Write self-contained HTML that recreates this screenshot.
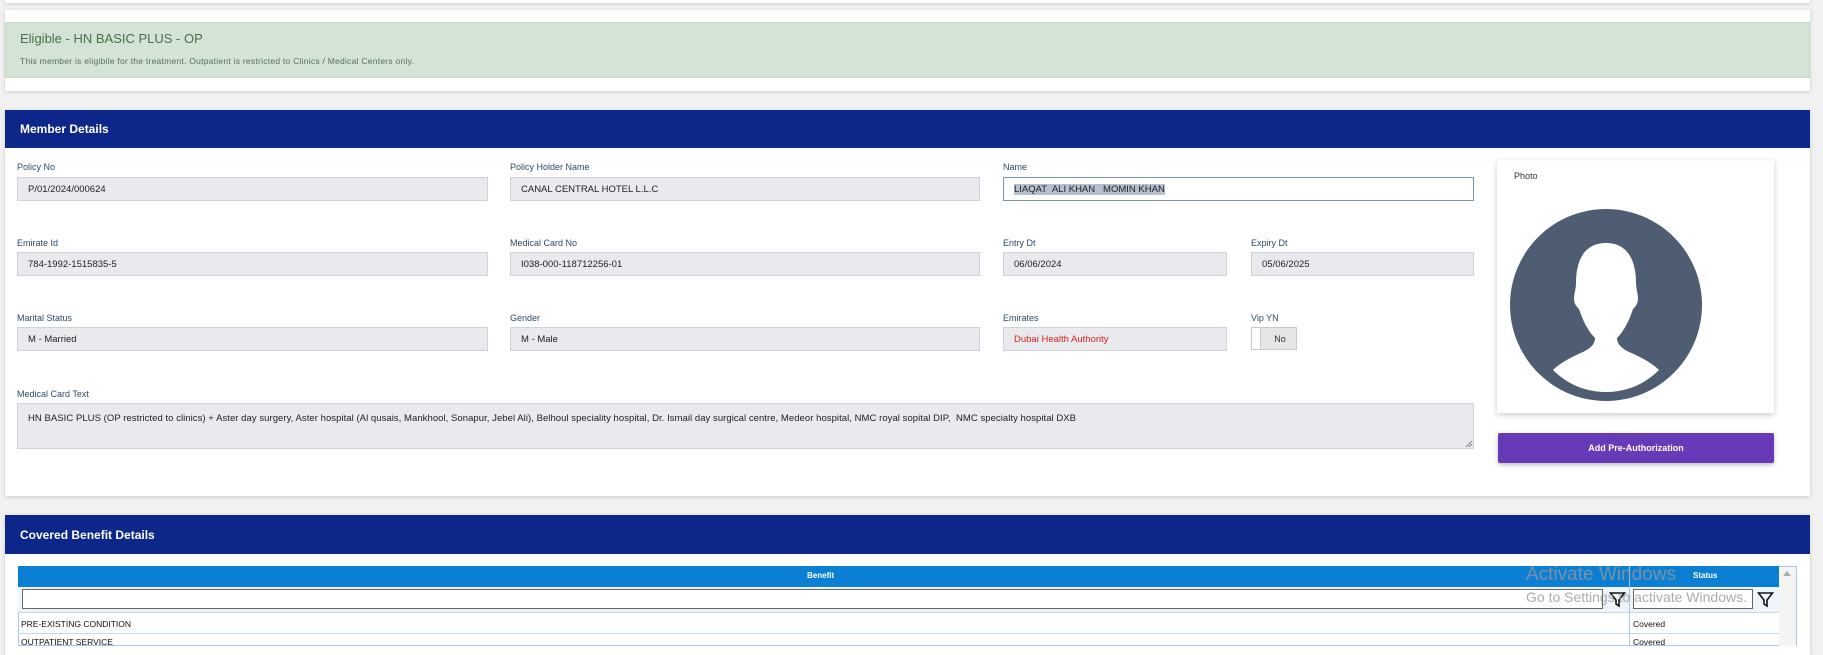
<!DOCTYPE html>
<html><head><meta charset="utf-8"><style>
*{box-sizing:border-box;margin:0;padding:0}
body{width:1823px;height:641px;overflow:hidden;background:#f1f1f1;font-family:"Liberation Sans",Arial,sans-serif;position:relative}
.abs{position:absolute}
.card{position:absolute;background:#fff;box-shadow:0 1px 4px rgba(0,0,0,.15)}
.hdr{position:absolute;background:#0d2689;color:#fff;font-size:12px;font-weight:bold;padding-left:15px;display:flex;align-items:center}
.lbl{position:absolute;font-size:9px;color:#2e4a66}
.inp{position:absolute;height:24px;background:#e8eaed;border:1px solid #cfd3d8;font-size:9.5px;color:#222;padding-left:10px;display:flex;align-items:center}
</style></head><body>
<div class="card" style="left:5px;top:-10px;width:1805px;height:13px"></div>
<div class="card" style="left:5px;top:10px;width:1805px;height:81px"></div>
<div class="abs" style="left:5px;top:22px;width:1805px;height:56px;background:#d3e3d6;border:1px solid #c5d8c8"></div>
<div class="abs" style="left:20px;top:31px;font-size:13px;color:#4b6e4b">Eligible - HN BASIC PLUS - OP</div>
<div class="abs" style="left:20px;top:56px;font-size:8.5px;color:#55705a;letter-spacing:0.25px">This member is eligibile for the treatment. Outpatient is restricted to Clinics / Medical Centers only.</div>

<div class="card" style="left:5px;top:110px;width:1805px;height:386px"></div>
<div class="hdr" style="left:5px;top:110px;width:1805px;height:38px">Member Details</div>

<div class="lbl" style="left:17px;top:162px">Policy No</div>
<div class="inp" style="left:17px;top:177px;width:471px">P/01/2024/000624</div>
<div class="lbl" style="left:510px;top:162px">Policy Holder Name</div>
<div class="inp" style="left:510px;top:177px;width:470px">CANAL CENTRAL HOTEL L.L.C</div>
<div class="lbl" style="left:1003px;top:162px">Name</div>
<div class="inp" style="left:1003px;top:177px;width:471px;background:#fff;border-color:#7d93aa"><span style="background:#b5c1cf">LIAQAT&nbsp; ALI KHAN &nbsp; MOMIN KHAN</span></div>

<div class="lbl" style="left:17px;top:238px">Emirate Id</div>
<div class="inp" style="left:17px;top:252px;width:471px">784-1992-1515835-5</div>
<div class="lbl" style="left:510px;top:238px">Medical Card No</div>
<div class="inp" style="left:510px;top:252px;width:470px">I038-000-118712256-01</div>
<div class="lbl" style="left:1003px;top:238px">Entry Dt</div>
<div class="inp" style="left:1003px;top:252px;width:224px">06/06/2024</div>
<div class="lbl" style="left:1251px;top:238px">Expiry Dt</div>
<div class="inp" style="left:1251px;top:252px;width:223px">05/06/2025</div>

<div class="lbl" style="left:17px;top:313px">Marital Status</div>
<div class="inp" style="left:17px;top:327px;width:471px">M - Married</div>
<div class="lbl" style="left:510px;top:313px">Gender</div>
<div class="inp" style="left:510px;top:327px;width:470px">M - Male</div>
<div class="lbl" style="left:1003px;top:313px">Emirates</div>
<div class="inp" style="left:1003px;top:327px;width:224px;color:#e02020">Dubai Health Authority</div>
<div class="lbl" style="left:1251px;top:313px">Vip YN</div>
<div class="abs" style="left:1251px;top:327px;width:46px;height:23px;background:#e6e6e6;border:1px solid #c8c8c8;font-size:9px;color:#333;display:flex;align-items:center;justify-content:center;padding-left:12px"><div style="position:absolute;left:0;top:0;width:9px;height:21px;background:#fff;border-right:1px solid #ccc"></div>No</div>

<div class="lbl" style="left:17px;top:389px">Medical Card Text</div>
<div class="inp" style="left:17px;top:403px;width:1457px;height:46px;align-items:flex-start;padding-top:9px;font-size:9.5px;letter-spacing:0.05px">HN BASIC PLUS (OP restricted to clinics) + Aster day surgery, Aster hospital (Al qusais, Mankhool, Sonapur, Jebel Ali), Belhoul speciality hospital, Dr. Ismail day surgical centre, Medeor hospital, NMC royal sopital DIP,&nbsp; NMC specialty hospital DXB</div>
<svg class="abs" style="left:1465px;top:440px" width="8" height="8" viewBox="0 0 8 8"><path d="M1 7L7 1M4 7L7 4" stroke="#666" stroke-width="0.8"/></svg>

<div class="card" style="left:1497px;top:160px;width:277px;height:253px;box-shadow:0 2px 6px rgba(0,0,0,.2)"></div>
<div class="abs" style="left:1514px;top:171px;font-size:9px;color:#333">Photo</div>
<svg class="abs" style="left:1505px;top:205px" width="200" height="200" viewBox="0 0 200 200">
<ellipse cx="101" cy="100" rx="96" ry="96" fill="#4f5d73"/>
<path d="M101 38c-22 0-30 18-30 40 0 6-2 10-2 16 0 5 3 8 5 10 4 12 9 22 16 29 0 6-4 10-12 14-14 6-24 12-30 18 14 14 32 22 53 22s39-8 53-22c-6-6-16-12-30-18-8-4-12-8-12-14 7-7 12-17 16-29 2-2 5-5 5-10 0-6-2-10-2-16 0-22-8-40-30-40z" fill="#fff"/>
</svg>
<div class="abs" style="left:1498px;top:433px;width:276px;height:30px;background:#673ab7;color:#fff;font-size:9px;font-weight:bold;display:flex;align-items:center;justify-content:center;border-radius:2px;box-shadow:0 2px 5px rgba(0,0,0,.25)">Add Pre-Authorization</div>

<div class="card" style="left:5px;top:515px;width:1805px;height:140px"></div>
<div class="hdr" style="left:5px;top:515px;width:1805px;height:39px">Covered Benefit Details</div>
<div class="abs" style="left:18px;top:566px;width:1779px;height:80px;border:1px solid #a9c8e6;background:#fff"></div>
<div class="abs" style="left:18px;top:566px;width:1761px;height:21px;background:#0a7fd4"></div>
<div class="abs" style="left:807px;top:571px;font-size:8px;font-weight:bold;color:#fff">Benefit</div>
<div class="abs" style="left:1693px;top:571px;font-size:8px;font-weight:bold;color:#fff">Status</div>
<div class="abs" style="left:18px;top:587px;width:1761px;height:26px;background:#eef4fa;border-bottom:1px solid #c3d8ec"></div>
<div class="abs" style="left:22px;top:589px;width:1581px;height:20px;background:#fff;border:1px solid #666"></div>
<div class="abs" style="left:1633px;top:589px;width:120px;height:20px;background:#fff;border:1px solid #666"></div>
<svg class="abs" style="left:1609px;top:591px" width="17" height="17" viewBox="0 0 17 17"><path d="M1.5 2h14l-5.5 7v6l-3-2v-4z" fill="none" stroke="#111" stroke-width="1.6"/></svg>
<svg class="abs" style="left:1757px;top:591px" width="17" height="17" viewBox="0 0 17 17"><path d="M1.5 2h14l-5.5 7v6l-3-2v-4z" fill="none" stroke="#111" stroke-width="1.6"/></svg>
<div class="abs" style="left:1629px;top:566px;width:1px;height:80px;background:#a9c8e6"></div>
<div class="abs" style="left:21px;top:619px;font-size:8.5px;color:#111">PRE-EXISTING CONDITION</div>
<div class="abs" style="left:1633px;top:619px;font-size:8.5px;color:#111">Covered</div>
<div class="abs" style="left:18px;top:633px;width:1761px;height:1px;background:#c3d8ec"></div>
<div class="abs" style="left:21px;top:637px;font-size:8.5px;color:#111">OUTPATIENT SERVICE</div>
<div class="abs" style="left:1633px;top:637px;font-size:8.5px;color:#111">Covered</div>
<div class="abs" style="left:1779px;top:567px;width:17px;height:79px;background:#f4f4f4"></div>
<div class="abs" style="left:1783px;top:571px;width:0;height:0;border-left:4px solid transparent;border-right:4px solid transparent;border-bottom:5px solid #aaa"></div>
<div class="abs" style="left:1526px;top:564px;font-size:19px;color:rgba(150,150,150,.8)">Activate Windows</div>
<div class="abs" style="left:1526px;top:589px;font-size:14px;color:rgba(150,150,150,.8)">Go to Settings to activate Windows.</div>
</body></html>
